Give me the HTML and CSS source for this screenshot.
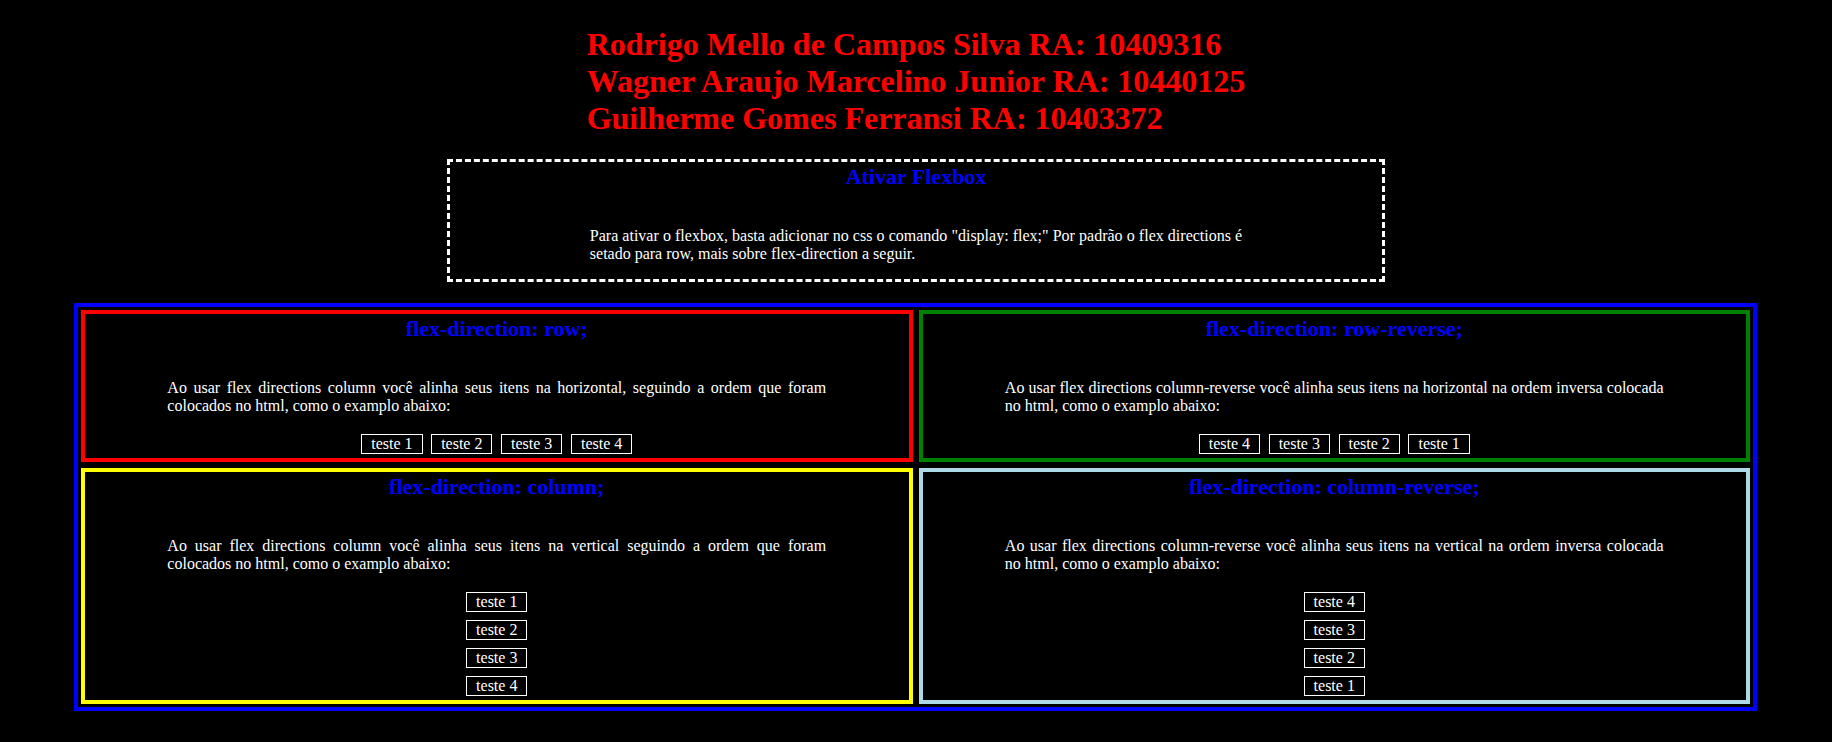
FILE: index.html
```html
<!DOCTYPE html>
<html lang="pt-BR">
<head>
<meta charset="utf-8">
<title>Flexbox</title>
<link rel="stylesheet" href="styles.css">
</head>
<body>
<header class="authors">
  <h1 class="authors-title">Rodrigo Mello de Campos Silva RA: 10409316<br>Wagner Araujo Marcelino Junior RA: 10440125<br>Guilherme Gomes Ferransi RA: 10403372</h1>
</header>

<section class="intro">
  <h2 class="box-title">Ativar Flexbox</h2>
  <p class="intro-text">Para ativar o flexbox, basta adicionar no css o comando "display: flex;" Por padrão o flex directions é setado para row, mais sobre flex-direction a seguir.</p>
</section>

<main class="grid">
  <section class="card card-red">
    <h2 class="box-title">flex-direction: row;</h2>
    <p class="desc">Ao usar flex directions column você alinha seus itens na horizontal, seguindo a ordem que foram colocados no html, como o examplo abaixo:</p>
    <div class="items items-row">
      <span class="item">teste 1</span><span class="item">teste 2</span><span class="item">teste 3</span><span class="item">teste 4</span>
    </div>
  </section>
  <section class="card card-green">
    <h2 class="box-title">flex-direction: row-reverse;</h2>
    <p class="desc">Ao usar flex directions column-reverse você alinha seus itens na horizontal na ordem inversa colocada no html, como o examplo abaixo:</p>
    <div class="items items-row-reverse">
      <span class="item">teste 1</span><span class="item">teste 2</span><span class="item">teste 3</span><span class="item">teste 4</span>
    </div>
  </section>
  <section class="card card-yellow">
    <h2 class="box-title">flex-direction: column;</h2>
    <p class="desc">Ao usar flex directions column você alinha seus itens na vertical seguindo a ordem que foram colocados no html, como o examplo abaixo:</p>
    <div class="items items-column">
      <span class="item">teste 1</span><span class="item">teste 2</span><span class="item">teste 3</span><span class="item">teste 4</span>
    </div>
  </section>
  <section class="card card-lightblue">
    <h2 class="box-title">flex-direction: column-reverse;</h2>
    <p class="desc">Ao usar flex directions column-reverse você alinha seus itens na vertical na ordem inversa colocada no html, como o examplo abaixo:</p>
    <div class="items items-column-reverse">
      <span class="item">teste 1</span><span class="item">teste 2</span><span class="item">teste 3</span><span class="item">teste 4</span>
    </div>
  </section>
</main>
</body>
</html>
```
FILE: styles.css
```css
* {
  box-sizing: border-box;
}

body {
  margin: 0;
  background: #000;
  color: #fff;
  font-family: "Liberation Serif", "Times New Roman", serif;
  font-size: 16px;
}

.authors {
  display: flex;
  justify-content: center;
  padding-top: 26px;
}

.authors-title {
  margin: 0;
  font-size: 32px;
  font-weight: bold;
  color: #ff0000;
  line-height: normal;
}

.intro {
  width: 938px;
  margin: 22px auto 0;
  border: 3px dashed #fff;
}

.box-title {
  margin: 2px 0 0;
  font-size: 22px;
  font-weight: bold;
  color: #0000ff;
  text-align: center;
  line-height: normal;
}

.intro-text {
  width: 70%;
  margin: 37px auto 16px;
  text-align: justify;
  line-height: normal;
}

.grid {
  display: flex;
  flex-wrap: wrap;
  margin: 21px 75px 0 74px;
  border: 4px solid #0000ff;
}

.card {
  width: calc(50% - 6px);
  margin: 3px;
  border: 4px solid;
}

.card-red { border-color: #ff0000; }
.card-green { border-color: #008000; }
.card-yellow { border-color: #ffff00; }
.card-lightblue { border-color: #add8e6; }

.desc {
  width: 80%;
  margin: 37px auto 15px;
  text-align: justify;
  line-height: normal;
}

.items {
  display: flex;
  justify-content: center;
  align-items: center;
}

.items-row { flex-direction: row; }
.items-row-reverse { flex-direction: row-reverse; }
.items-column { flex-direction: column; }
.items-column-reverse { flex-direction: column-reverse; }

.item {
  display: block;
  border: 1px solid #fff;
  padding: 0 9px;
  margin: 4.3px;
  line-height: 17.4px;
}
```
